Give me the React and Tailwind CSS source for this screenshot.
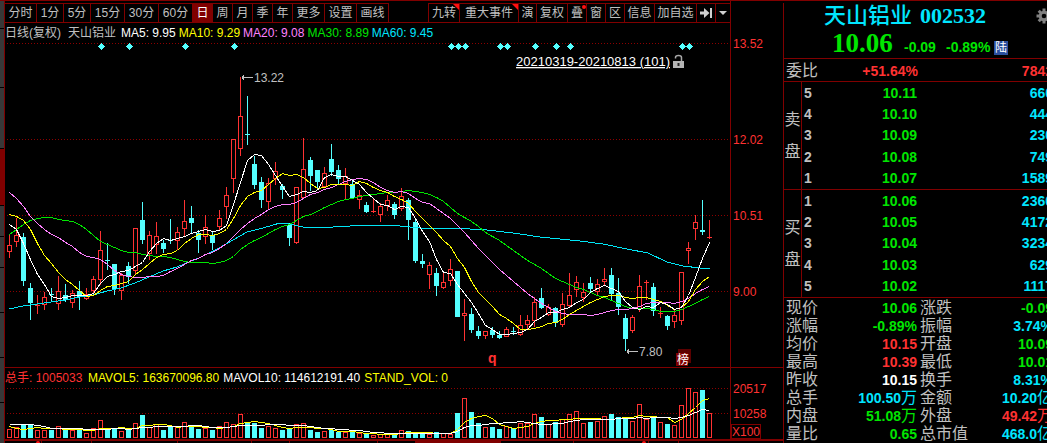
import React from "react";

// Each session: [high, body top, body bottom, low, rising] on the plot's vertical scale.
const candles = [
  [235, 245, 252, 258, 1], [218, 235, 242, 247, 1], [233, 237, 281, 286, 0], [283, 288, 303, 320, 0],
  [295, 305, 305, 314, 1], [292, 297, 305, 310, 1], [288, 294, 294, 302, 0], [276, 291, 304, 310, 1],
  [284, 295, 300, 302, 0], [290, 293, 303, 308, 1], [281, 291, 297, 310, 0], [288, 294, 299, 300, 1],
  [276, 279, 291, 294, 1], [231, 250, 280, 285, 1], [243, 260, 260, 270, 0], [264, 264, 289, 295, 0],
  [273, 275, 291, 300, 1], [262, 266, 277, 284, 0], [228, 228, 271, 274, 1], [202, 220, 240, 244, 0],
  [231, 235, 254, 260, 1], [222, 236, 245, 254, 1], [240, 243, 249, 253, 0], [219, 240, 240, 244, 0],
  [227, 232, 241, 250, 1], [200, 221, 229, 237, 1], [206, 218, 223, 233, 0], [230, 233, 240, 253, 0],
  [215, 227, 237, 244, 1], [232, 235, 243, 250, 0], [210, 218, 227, 230, 1], [187, 195, 207, 219, 1],
  [139, 139, 179, 193, 1], [77, 116, 149, 156, 1], [96, 134, 134, 145, 0], [156, 164, 185, 189, 0],
  [177, 182, 200, 208, 0], [178, 183, 202, 210, 1], [162, 171, 179, 185, 1], [184, 186, 190, 199, 0],
  [223, 225, 238, 246, 0], [187, 187, 243, 244, 1], [138, 169, 198, 199, 1], [157, 160, 176, 191, 0],
  [170, 170, 182, 189, 0], [167, 173, 187, 188, 1], [144, 159, 172, 176, 0], [165, 170, 179, 184, 0],
  [168, 176, 184, 199, 1], [180, 184, 198, 199, 0], [190, 195, 200, 209, 1], [202, 205, 212, 213, 0],
  [198, 211, 211, 213, 1], [203, 206, 215, 222, 1], [195, 200, 206, 211, 1], [202, 204, 215, 219, 0],
  [188, 196, 209, 211, 1], [198, 200, 220, 240, 0], [219, 222, 261, 263, 0], [254, 261, 264, 268, 0],
  [262, 265, 275, 289, 1], [268, 273, 286, 296, 0], [272, 282, 288, 289, 1], [259, 269, 281, 286, 1],
  [271, 271, 317, 317, 0], [299, 313, 316, 341, 1], [308, 314, 330, 333, 0], [326, 331, 336, 339, 0],
  [331, 331, 336, 339, 1], [327, 330, 335, 338, 0], [331, 335, 338, 339, 0], [327, 329, 337, 337, 1],
  [327, 331, 331, 335, 0], [315, 325, 335, 336, 1], [315, 320, 325, 330, 1], [297, 302, 321, 327, 1],
  [288, 298, 308, 309, 0], [304, 307, 315, 316, 1], [307, 308, 323, 327, 0], [293, 304, 325, 327, 1],
  [273, 295, 306, 308, 1], [276, 282, 290, 297, 1], [283, 292, 298, 302, 1], [277, 283, 289, 292, 0],
  [279, 284, 292, 295, 1], [268, 279, 282, 285, 1], [268, 275, 294, 300, 0], [278, 293, 307, 315, 0],
  [314, 318, 339, 351, 0], [315, 317, 331, 333, 1], [275, 286, 309, 312, 1], [280, 282, 282, 300, 1],
  [283, 287, 311, 316, 0], [307, 313, 313, 318, 1], [315, 316, 326, 330, 0], [310, 315, 322, 328, 1],
  [272, 272, 321, 325, 1], [242, 248, 251, 264, 1], [215, 222, 229, 240, 1], [200, 230, 232, 235, 0],
  [220, 237, 237, 239, 1],
];

// Height of each volume bar, in thirds of a pixel.
const volumes = [
  26, 32, 39, 39, 23, 23, 24, 35, 27, 23, 27, 14, 29, 53, 29, 29, 20, 26, 44, 69, 32, 41, 24, 35, 32,
  47, 36, 27, 29, 24, 35, 47, 41, 71, 47, 45, 30, 37, 29, 24, 29, 41, 44, 24, 18, 20, 25, 18, 19, 17,
  14, 14, 8, 13, 14, 12, 23, 21, 15, 15, 11, 18, 14, 12, 75, 119, 78, 45, 32, 33, 27, 36, 29, 44, 45,
  71, 63, 41, 48, 56, 71, 80, 45, 49, 52, 65, 72, 63, 61, 50, 101, 56, 63, 47, 42, 38, 98, 149, 137,
  144, 74,
];

const RED = "#ff3232";
const CYAN = "#54ffff";
const GRID = "#8c0000";

const cx = (i) => 9.5 + i * 7;
const closes = candles.map(([, top, bottom, , up]) => (up ? top : bottom));
const volTops = volumes.map((v) => 438 - v / 3);

function average(values, n, lead) {
  return values.map((_, i) => {
    if (i < lead.length) return lead[i];
    const part = values.slice(Math.max(0, i - n + 1), i + 1);
    return part.reduce((a, b) => a + b, 0) / part.length;
  });
}

const toPoints = (ys) => ys.map((y, i) => `${cx(i)},${Math.round(y) + 0.5}`).join(" ");

const ma5 = average(closes, 5, [224, 229, 243, 259]);
const ma10 = average(closes, 10, [214, 216, 220, 229, 243, 255, 263, 272, 279]);
const ma20 = average(closes, 20, [
  192, 198, 206, 216, 223, 229, 234, 237, 242, 246, 252, 256, 257, 259, 264, 270, 274, 276, 277,
]);
const ma30 = average(closes, 30, [
  234, 229, 224, 220, 218, 217, 217, 219, 220, 221, 224, 229, 235, 241, 244, 247, 250, 252, 252, 254,
  255, 256, 256, 257, 259, 261, 262, 262, 262,
]);
const ma60 =
  "9,309 23,306 37,304 51,302 65,300 79,297 93,295 107,291 121,288 135,283 149,277 163,271 177,267 191,261 199,258 219,248 233,240 247,232 263,228 280,223 289,224 303,227 317,227 333,227 350,226 373,225 400,226 420,228 440,229 453,228 487,230 513,233 540,237 560,239 580,241 603,244 627,249 648,253 667,262 683,266 700,268 710,268";
const vol5 = average(volTops, 5, [426, 428, 429, 428]);
const vol10 = average(volTops, 10, [424, 424, 424, 424, 425, 426, 428, 428, 428]);

const diamonds = [101, 129, 185, 234, 451, 458, 465, 500, 507, 535, 556, 570, 682, 689];

function Candle({ i, data }) {
  const [high, top, bottom, low, up] = data;
  const x = cx(i);
  const color = up ? RED : CYAN;
  if (bottom - top < 2) {
    return (
      <path d={`M${x} ${high}V${low}M${x - 2.5} ${top + 0.5}h5`} stroke={color} fill="none" />
    );
  }
  if (!up) {
    return (
      <g fill={color}>
        <rect x={x - 0.5} y={high} width="1" height={low - high} />
        <rect x={x - 2.5} y={top} width="5" height={bottom - top} />
      </g>
    );
  }
  return (
    <path
      d={`M${x} ${high}V${top}M${x} ${bottom}V${low}M${x - 2} ${top + 0.5}h4V${bottom - 0.5}h-4z`}
      stroke={color}
      fill="none"
    />
  );
}

function PricePlot() {
  return (
    <svg
      viewBox="5 43 725 324"
      preserveAspectRatio="xMinYMin meet"
      className="block w-full overflow-visible"
      shapeRendering="crispEdges"
      role="img"
      aria-label="天山铝业日线"
    >
      {[43, 139, 215, 291].map((y) => (
        <path key={y} d={`M7 ${y + 0.5}H730`} stroke={GRID} strokeDasharray="1 2" />
      ))}
      {diamonds.map((x) => (
        <path
          key={x}
          d={`M${x} 43h1v1h1v1h1v1h1v1h-1v1h-1v1h-1v1h-1v-1h-1v-1h-1v-1h-1v-1h1v-1h1v-1h1z`}
          fill={CYAN}
        />
      ))}
      {candles.map((c, i) => (
        <Candle key={i} i={i} data={c} />
      ))}
      <g fill="none">
        <polyline points={ma60} stroke="#00e6f6" />
        <polyline points={toPoints(ma30)} stroke="#00e600" />
        <polyline points={toPoints(ma20)} stroke="#ff80ff" />
        <polyline points={toPoints(ma10)} stroke="#ffff00" />
        <polyline points={toPoints(ma5)} stroke="#ffffff" />
      </g>
      <g stroke="#c0c0c0" fill="#c0c0c0">
        <path d="M242 77.5h11M243.500 75v5M242 76.500h1M242 78.500h1" />
        <path d="M627 351.500h11M628.500 349v5M627 350.500h1M627 352.500h1" />
      </g>
      <g fill="#c0c0c0" fontSize="12">
        <text x="254" y="82">13.22</text>
        <text x="639" y="356">7.80</text>
      </g>
      <text x="670" y="66" textAnchor="end" fontSize="13" fill="#ffffff" textDecoration="underline">
        20210319-20210813 (101)
      </text>
      <g shapeRendering="auto">
        <path d="M675.5 58.500v-1a3 2 0 0 1 6 0v3.500" stroke="#a8a8a8" strokeWidth="1.500" fill="none" />
        <rect x="673" y="61" width="11" height="7" fill="#b4b4b4" />
        <rect x="677.500" y="63" width="2" height="3" fill="#222222" />
      </g>
      <text x="488" y="363" fontSize="14" fontWeight="bold" fill={RED}>q</text>
      <rect x="678" y="349" width="13" height="14" fill="#5c0000" />
      <rect x="676" y="353" width="12" height="13" fill="#800000" />
      <text x="677" y="364" fontSize="12" fill="#ffffff">榜</text>
    </svg>
  );
}

function VolumePlot() {
  return (
    <svg
      viewBox="5 388 725 51"
      preserveAspectRatio="xMinYMin meet"
      className="block w-full overflow-visible"
      shapeRendering="crispEdges"
      role="img"
      aria-label="成交量"
    >
      <path d="M7 388.500H730M7 413.500H730" stroke={GRID} strokeDasharray="1 2" />
      {volTops.map((t, i) => {
        const y = Math.round(t);
        return candles[i][4] ? (
          <rect key={i} x={cx(i) - 2} y={y + 0.5} width="4" height={437 - y} fill="none" stroke={RED} />
        ) : (
          <rect key={i} x={cx(i) - 2.5} y={y} width="5" height={438 - y} fill={CYAN} />
        );
      })}
      <polyline points={toPoints(vol5)} fill="none" stroke="#ffff00" />
      <polyline points={toPoints(vol10)} fill="none" stroke="#ffffff" />
    </svg>
  );
}

const periods = [
  ["分时", "w-[32px]"], ["1分", "w-[27px]"], ["5分", "w-[27px]"], ["15分", "w-[34px]"],
  ["30分", "w-[34px]"], ["60分", "w-[34px]"], ["日", "w-[20px] bg-[#800000] text-white"],
  ["周", "w-[20px]"], ["月", "w-[20px]"], ["季", "w-[20px]"], ["年", "w-[20px]"],
  ["更多", "w-[32px]"], ["设置", "w-[32px]"], ["画线", "w-[32px]"],
];

const tools = [
  ["九转", "w-[31px]", "corner"], ["重大事件", "w-[59px]", "corner"], ["演", "w-[18px]"],
  ["复权", "w-[31px]"], ["叠", "w-[19px]", "dot"], ["窗", "w-[19px]"], ["区", "w-[19px]"],
  ["信息", "w-[30px]"], ["加自选", "w-[42px]"],
];

const cell =
  "relative flex h-full shrink-0 items-center justify-center whitespace-nowrap border-r border-[#800000] ";

function Toolbar() {
  return (
    <div className="mt-[2px] flex h-5 border-b border-[#800000] text-[12px] leading-[18px] text-[#c0c0c0]">
      <div className="flex border-t border-[#800000]">
        {periods.map(([label, look]) => (
          <button key={label} type="button" className={cell + look}>{label}</button>
        ))}
      </div>
      <div className="ml-auto flex border-l border-t border-[#800000]">
        {tools.map(([label, look, mark]) => (
          <button key={label} type="button" className={cell + look}>
            {label}
            {mark === "corner" && (
              <svg className="absolute right-0 top-0" width="6" height="6" aria-hidden="true">
                <path d="M0 0h6v6z" fill="#ff1010" />
              </svg>
            )}
            {mark === "dot" && (
              <span className="absolute right-0 top-px size-1 rounded-full bg-[#ff1010]" />
            )}
          </button>
        ))}
        <button type="button" aria-label="右移" className={cell + "w-[19px]"}>
          <svg width="13" height="10" aria-hidden="true">
            <path d="M0 3.500h4V0l5.500 5L4 10V6.500H0zM10 0h2v10h-2z" fill="#d0d0d0" />
          </svg>
        </button>
        <button type="button" aria-label="展开" className="flex w-[14px] items-center justify-center">
          <svg width="8" height="4" aria-hidden="true">
            <path d="M0 0h8L4 4z" fill="#d0d0d0" />
          </svg>
        </button>
      </div>
    </div>
  );
}

const asks = [["5", "10.11", "660"], ["4", "10.10", "444"], ["3", "10.09", "230"], ["2", "10.08", "749"], ["1", "10.07", "1589"]];
const bids = [["1", "10.06", "2360"], ["2", "10.05", "4172"], ["3", "10.04", "3234"], ["4", "10.03", "629"], ["5", "10.02", "1117"]];

function Book({ side, rows }) {
  return (
    <table className="h-[108px] w-full table-fixed border-separate border-spacing-0 border-b border-[#800000] text-[14px] font-bold leading-4">
      <tbody>
        {rows.map(([level, price, qty], i) => (
          <tr key={level}>
            {i === 0 && (
              <th
                rowSpan={5}
                scope="rowgroup"
                className="w-[18px] border-r border-[#800000] p-0 text-[16px] font-normal leading-8 text-[#c0c0c0]"
              >
                {side[0]}
                <br />
                {side[1]}
              </th>
            )}
            <th scope="row" className="w-[22px] p-0 pl-[2px] text-left text-[#c0c0c0]">{level}</th>
            <td className="w-[93px] p-0 text-right text-[#00e600]">{price}</td>
            <td className="p-0 text-right text-[#00e6ff]">{qty}</td>
          </tr>
        ))}
      </tbody>
    </table>
  );
}

const G = "text-[#00e600]";
const R = "text-[#ff3232]";
const C = "text-[#00e6ff]";
const stats = [
  ["现价", "10.06", "", G, "涨跌", "-0.09", "", G],
  ["涨幅", "-0.89%", "", G, "振幅", "3.74%", "", C],
  ["均价", "10.15", "", R, "开盘", "10.09", "", G],
  ["最高", "10.39", "", R, "最低", "10.01", "", G],
  ["昨收", "10.15", "", "text-white", "换手", "8.31%", "", C],
  ["总手", "100.50", "万", C, "金额", "10.20", "亿", C],
  ["内盘", "51.08", "万", G, "外盘", "49.42", "万", R],
  ["量比", "0.65", "", G, "总市值", "468.0", "亿", C],
];

function Value({ n, unit, tone, width }) {
  return (
    <td className={"p-0 text-right text-[14px] font-bold " + width + tone}>
      {n}
      {unit && <span className="text-[16px] font-normal">{unit}</span>}
    </td>
  );
}

function QuotePanel() {
  return (
    <aside className="mt-[2px] w-[264px] shrink-0 overflow-hidden border-l border-[#800000]">
      <div className="w-[269px]">
        <header className="flex h-[56px] flex-col border-b border-[#800000]">
          <div className="flex h-[26px] items-center pl-10 text-[22px] leading-[26px] text-[#00e6ff]">
            <h1 className="font-medium">天山铝业</h1>
            <span className="ml-2 font-['Liberation_Serif',serif] font-bold">002532</span>
            <button type="button" aria-label="设置" className="ml-auto mr-px">
              <svg width="16" height="16" viewBox="-8 -8 16 16" aria-hidden="true">
                <g fill="#808080">
                  {[0, 45, 90, 135].map((a) => (
                    <rect key={a} x="-1.500" y="-7.500" width="3" height="15" transform={`rotate(${a})`} />
                  ))}
                  <circle r="5.300" />
                </g>
                <circle r="2.300" fill="#000000" />
              </svg>
            </button>
          </div>
          <div className="flex h-[29px] items-baseline pl-12 text-[14px] font-bold leading-[29px] text-[#00e600]">
            <span className="w-[72px] font-['Liberation_Serif',serif] text-[27px]">10.06</span>
            <span className="w-[42px]">-0.09</span>
            <span className="w-[48px]">-0.89%</span>
            <span className="bg-[#2b4f9e] px-px text-[12px] font-normal leading-[14px] text-white">陆</span>
          </div>
        </header>
        <div className="flex h-[23px] items-center border-b border-[#800000] pl-[2px] pt-px text-[14px] font-bold leading-5 text-[#ff3232]">
          <span className="w-[34px] text-[16px] font-normal text-[#c0c0c0]">委比</span>
          <span className="w-[98px] text-right">+51.64%</span>
          <span className="ml-auto">7842</span>
        </div>
        <Book side="卖盘" rows={asks} />
        <Book side="买盘" rows={bids} />
        <div className="pt-px">
          <table className="w-full table-fixed border-collapse text-[16px] leading-[18px] text-[#c0c0c0]">
            <tbody>
              {stats.map(([a, an, au, at, b, bn, bu, bt]) => (
                <tr key={a} className="h-[18px]">
                  <th scope="row" className="w-[48px] whitespace-nowrap p-0 pl-[2px] text-left font-normal">{a}</th>
                  <Value n={an} unit={au} tone={at} width="w-[85px] " />
                  <th scope="row" className="w-[56px] whitespace-nowrap p-0 pl-[3px] text-left font-normal">{b}</th>
                  <Value n={bn} unit={bu} tone={bt} width="" />
                </tr>
              ))}
            </tbody>
          </table>
        </div>
      </div>
    </aside>
  );
}

const rail = [
  "h-[28px]", "h-[59px]", "h-[61px]", "h-[57px] bg-[#800000]", "h-[31px]", "h-[31px]", "h-[45px]",
  "h-[45px]", "h-[45px]", "h-[45px]",
];

// [look, left offset of an event mark]
const timeline = [
  ["w-[37px]", "left-[31px]"], ["w-[50px]"], ["w-[86px]"], ["w-[74px]"], ["w-[38px]"], ["w-[88px]"],
  ["w-[38px]"], ["w-[85px] bg-[#800000]"], ["w-[73px]"], ["w-[75px]", "left-[68px]"], ["w-[30px]"],
];

export default function App() {
  return (
    <div className="flex h-screen overflow-hidden border-t border-[#800000] bg-black font-['Liberation_Sans','Noto_Sans_CJK_SC',sans-serif]">
      <div className="flex w-1 shrink-0 flex-col bg-[#383838]">
        {rail.map((look, i) => (
          <div key={i} className={"shrink-0 border-b border-black " + look} />
        ))}
      </div>

      <main className="flex min-w-0 flex-1 flex-col border-l border-[#800000]">
        <div className="flex">
          <div className="min-w-0 flex-1">
            <Toolbar />
            <div className="flex h-5 items-center gap-[3px] whitespace-nowrap text-[12px] leading-5">
              <span className="w-[60px] text-[#c0c0c0]">日线(复权)</span>
              <span className="w-[50px] text-[#c0c0c0]">天山铝业</span>
              <span className="text-white">MA5: 9.95</span>
              <span className="text-[#ffff00]">MA10: 9.29</span>
              <span className="text-[#ff80ff]">MA20: 9.08</span>
              <span className="text-[#00e600]">MA30: 8.89</span>
              <span className="text-[#00e6ff]">MA60: 9.45</span>
            </div>
            <PricePlot />
          </div>
          <div className="w-[53px] shrink-0 border-l border-[#800000]">
            <svg viewBox="731 1 52 366" className="block w-full" fontSize="12" fill={RED}>
              <text x="733" y="48">13.52</text>
              <text x="733" y="144">12.02</text>
              <text x="733" y="220">10.51</text>
              <text x="733" y="296">9.00</text>
            </svg>
          </div>
        </div>

        <div className="flex border-t border-[#800000]">
          <div className="min-w-0 flex-1">
            <div className="flex h-5 items-center gap-1 whitespace-nowrap text-[12px] leading-5">
              <span className="w-[79px] text-[#ff3232]">总手: 1005033</span>
              <span className="text-[#ffff00]">MAVOL5: 163670096.80</span>
              <span className="text-white">MAVOL10: 114612191.40</span>
              <span className="text-[#ffff00]">STAND_VOL: 0</span>
            </div>
            <VolumePlot />
          </div>
          <div className="w-[53px] shrink-0 border-l border-[#800000]">
            <svg viewBox="731 368 52 71" className="block w-full" fontSize="12" fill={RED}>
              <text x="733" y="393">20517</text>
              <text x="733" y="418">10258</text>
              <rect x="731.500" y="424.500" width="29" height="14" fill="none" stroke="#800000" />
              <text x="732" y="436">X100</text>
            </svg>
          </div>
        </div>

        <div className="flex min-h-0 flex-1 border-t-2 border-[#800000]">
          {timeline.map(([look, mark], i) => (
            <div key={i} className={"relative shrink-0 border-r border-[#800000] " + look}>
              {mark && <span className={"absolute top-0 size-1 rounded-full bg-[#ff1010] " + mark} />}
            </div>
          ))}
        </div>
      </main>

      <QuotePanel />
    </div>
  );
}
